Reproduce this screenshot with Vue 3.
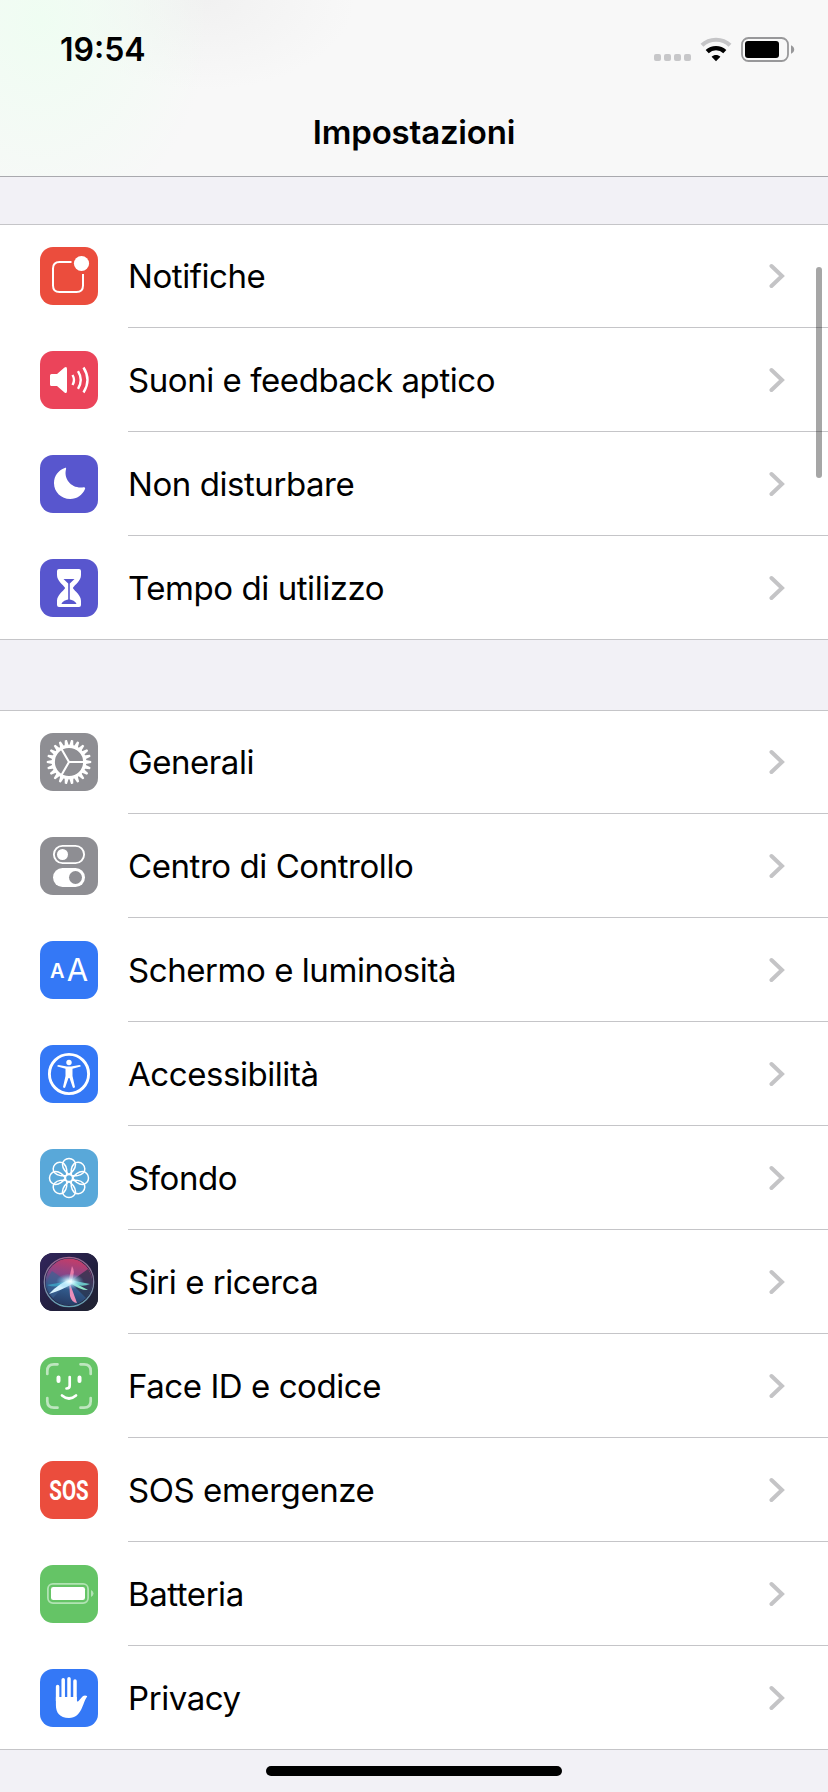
<template>
  <div class="screen">
    <header class="nav-header">
      <div class="status-bar">
        <span class="clock">19:54</span>
        <div class="status-icons">
          <svg class="signal" viewBox="0 0 37 7">
            <rect v-for="n in 4" :key="n" :x="(n - 1) * 10" y="0" width="7" height="7" rx="2" fill="#c7c7c9" />
          </svg>
          <svg class="wifi" viewBox="0 0 32 25" fill="none">
            <path d="M2 8.2C9.5 .9 22.5 .9 30 8.2" stroke="#c5c5c7" stroke-width="4.2" />
            <path d="M7.200 14.6C12 9.9 20 9.9 24.8 14.6" stroke="#000" stroke-width="4.4" />
            <path d="M16 24.3L11.6 19.8C14 17.5 18 17.5 20.4 19.8Z" fill="#000" />
          </svg>
          <svg class="battery" viewBox="0 0 54 25">
            <rect x="1" y="1" width="46" height="23" rx="6.5" fill="none" stroke="#98989a" stroke-width="1.8" />
            <rect x="4" y="4" width="34" height="17" rx="3" fill="#000" />
            <path d="M50 8.2C52 9 53.2 10.5 53.2 12.5S52 16 50 16.8Z" fill="#98989a" />
          </svg>
        </div>
      </div>
      <h1 class="title">Impostazioni</h1>
    </header>

    <main class="settings">
      <ul v-for="(group, index) in groups" :key="index" class="group">
        <li v-for="item in group" :key="item.icon" class="row">
          <span class="icon" :class="item.icon">
            <svg v-if="item.icon === 'notifications'" viewBox="0 0 58 58" fill="none">
              <path d="M31.5 15H19.5Q13 15 13 21.5V38.5Q13 45 19.5 45H36.5Q43 45 43 38.5V27" stroke="#fff" stroke-width="2" />
              <circle cx="41.500" cy="16.500" r="7.600" fill="#fff" />
            </svg>

            <svg v-else-if="item.icon === 'sounds'" viewBox="0 0 58 58" fill="none">
              <path d="M11.5 23H17L24.5 16.5Q27 15 27 18V40Q27 43 24.5 41.5L17 35H11.5Q10 35 10 33.5V24.5Q10 23 11.5 23Z" fill="#fff" />
              <path d="M32.5 24Q35.5 29 32.5 34M38 20.2Q43.5 29 38 37.8M43.5 16.5Q51.5 29 43.5 41.5" stroke="#fff" stroke-width="2.4" />
            </svg>

            <svg v-else-if="item.icon === 'dnd'" viewBox="0 0 58 58">
              <path d="M24.8 13C25.8 12.6 26.4 13.2 26 14.2C23.5 24 31.5 34 43.6 32.3C44.8 32 45.5 32.8 45 34C42.5 40 37 44 30.2 44C21.3 44 14 37 14 28.2C14 21 18.3 15.4 24.8 13Z" fill="#fff" />
            </svg>

            <svg v-else-if="item.icon === 'screentime'" viewBox="0 0 58 58">
              <path d="M19 10H39Q41 10 41 12V16C41 22 35 25.5 32.8 29C35 32.5 41 36 41 42V46Q41 48 39 48H19Q17 48 17 46V42C17 36 23 32.5 25.2 29C23 25.5 17 22 17 16V12Q17 10 19 10Z" fill="#fff" />
              <path d="M23.5 20H34.5L29.8 24.5V40.5C33 41 36 43 36.5 45H21.5C22 43 25 41 28.2 40.5V24.5Z" fill="#5856ce" />
            </svg>

            <svg v-else-if="item.icon === 'general'" viewBox="0 0 58 58" fill="none">
              <circle cx="29" cy="29" r="15.7" stroke="#fff" stroke-width="3.2" />
              <path
                v-for="angle in gearTeeth"
                :key="angle"
                d="M26.8 13.5L27.9 7Q29 6.4 30.1 7L31.2 13.5Z"
                fill="#fff"
                :transform="`rotate(${angle} 29 29)`"
              />
              <path d="M29 29H44M29 29L21.2 15.5M29 29L21.2 42.5" stroke="#fff" stroke-width="2.1" />
            </svg>

            <svg v-else-if="item.icon === 'control'" viewBox="0 0 58 58" fill="none">
              <rect x="13.9" y="8.9" width="30.2" height="17.2" rx="8.6" stroke="#fff" stroke-width="1.9" />
              <circle cx="22.5" cy="17.5" r="5.5" fill="#fff" />
              <rect x="13" y="31" width="32" height="19" rx="9.5" fill="#fff" />
              <circle cx="35.5" cy="40.5" r="6.5" fill="#8e8e93" />
            </svg>

            <svg v-else-if="item.icon === 'display'" viewBox="0 0 58 58" fill="#fff">
              <text x="17.2" y="37" class="small-a" text-anchor="middle">A</text>
              <text x="37.5" y="40" class="big-a" text-anchor="middle">A</text>
            </svg>

            <svg v-else-if="item.icon === 'accessibility'" viewBox="0 0 58 58" fill="none">
              <circle cx="29" cy="29" r="19.6" stroke="#fff" stroke-width="2.9" />
              <circle cx="29" cy="17.5" r="2.7" fill="#fff" />
              <path d="M18.5 20L27 21.4H31L39.5 20Q41.3 20.1 40.6 21.6L32.5 23.8V31L35 42Q34 43.7 32.8 42.5L29.5 33H28.5L25.2 42.5Q24 43.7 23 42L25.5 31V23.8L17.4 21.6Q16.8 20.1 18.5 20Z" fill="#fff" />
            </svg>

            <svg v-else-if="item.icon === 'wallpaper'" viewBox="0 0 58 58" fill="none" stroke="#fff" stroke-width="1.5">
              <circle cx="29" cy="29" r="3.6" />
              <path
                v-for="n in 8"
                :key="n"
                d="M29 25.4C26 23.6 22.5 19.5 22.5 15.5A6.5 6 0 0 1 35.5 15.5C35.5 19.5 32 23.6 29 25.4Z"
                :transform="`rotate(${n * 45} 29 29)`"
              />
            </svg>

            <svg v-else-if="item.icon === 'siri'" viewBox="0 0 58 58" fill="none">
              <defs>
                <linearGradient id="siri-bg" x1="0" y1="0" x2="1" y2="1">
                  <stop offset="0" stop-color="#32255c" />
                  <stop offset=".6" stop-color="#211f3d" />
                  <stop offset="1" stop-color="#202431" />
                </linearGradient>
                <linearGradient id="siri-orb" x1=".6" y1="0" x2=".4" y2="1">
                  <stop offset="0" stop-color="#c63c68" />
                  <stop offset=".35" stop-color="#8c4587" />
                  <stop offset=".65" stop-color="#315b8d" />
                  <stop offset="1" stop-color="#263961" />
                </linearGradient>
                <radialGradient id="siri-glow">
                  <stop offset="0" stop-color="#fff" />
                  <stop offset=".3" stop-color="#cdf4ff" stop-opacity=".85" />
                  <stop offset="1" stop-color="#54b9e8" stop-opacity="0" />
                </radialGradient>
                <linearGradient id="siri-ring" x1="0" y1="0" x2="0" y2="1">
                  <stop offset="0" stop-color="#9d668f" />
                  <stop offset="1" stop-color="#65a2b4" />
                </linearGradient>
              </defs>
              <rect width="58" height="58" fill="url(#siri-bg)" />
              <circle cx="29" cy="29" r="23.5" fill="url(#siri-orb)" />
              <path d="M30 29L48 16C54 25 54 36 46 45Z" fill="#293149" opacity=".75" />
              <path d="M28 29L12 18C6 26 6 37 13 45Z" fill="#3a6294" opacity=".65" />
              <path d="M29 28L7 32Q17 36 29 30Z" fill="#3eaccb" opacity=".75" />
              <path d="M30 27L50 31Q42 35 30 30Z" fill="#6fd3cc" opacity=".9" />
              <path d="M31 28L48 37Q42 38 30 30Z" fill="#8fe6c8" />
              <path d="M28 30L32 13Q36 19 31 30Z" fill="#e87ba9" />
              <path d="M29 28L37 50Q32 50 30 43Z" fill="#ea8fba" />
              <path d="M32 26Q20 29 9 41Q22 37 32 31Z" fill="#d6f3ff" />
              <ellipse cx="30" cy="28.5" rx="14" ry="8" fill="url(#siri-glow)" />
              <circle cx="29" cy="29" r="24.7" stroke="url(#siri-ring)" stroke-width="1.3" />
            </svg>

            <svg v-else-if="item.icon === 'faceid'" viewBox="0 0 58 58" fill="none" stroke="#fff" stroke-linecap="round">
              <path d="M7.3 17V14Q7.3 7.3 14 7.3H17.5M40.5 7.3H44Q50.7 7.3 50.7 14V17M50.7 41V44Q50.7 50.7 44 50.7H40.5M17.5 50.7H14Q7.3 50.7 7.3 44V41" stroke-width="2.7" opacity=".58" />
              <path d="M18.5 20.5V24M39.5 20.5V24" stroke-width="4" />
              <path d="M29.7 20V28.5Q29.7 31.5 26.5 31.5M22 38.5Q29 44.5 36 38.5" stroke-width="2.7" />
            </svg>

            <svg v-else-if="item.icon === 'sos'" viewBox="0 0 58 58" fill="#fff">
              <text class="sos-text" text-anchor="middle" transform="translate(29 38.7) scale(.76 1)">SOS</text>
            </svg>

            <svg v-else-if="item.icon === 'power'" viewBox="0 0 58 58" fill="none">
              <rect x="7.9" y="18.9" width="40.2" height="19.2" rx="5" stroke="#b2e3b4" stroke-width="1.8" />
              <rect x="11" y="22" width="34" height="13" rx="2.3" fill="#fff" />
              <path d="M51 25Q53.5 26.3 53.5 28.5T51 32Z" fill="#b2e3b4" />
            </svg>

            <svg v-else viewBox="0 0 58 58" fill="none">
              <path d="M17.6 17.5V32M23.2 10.7V32M29 9.8V32M35 11.9V32" stroke="#fff" stroke-width="3.5" stroke-linecap="round" />
              <path d="M15.9 28H36.8V31C37 33 38 33 39 31.5L42.5 27.5Q44.5 26 47 27Q47.5 27.5 46.5 28.5C42.5 34 42 48.8 29 49C19.5 49 15.9 43.5 15.9 36Z" fill="#fff" />
            </svg>
          </span>

          <div class="row-content">
            <span class="label">{{ item.label }}</span>
            <svg class="chevron" viewBox="0 0 16 26" fill="none">
              <path d="M2.5 3L13 13L2.5 23" stroke="#c4c4c6" stroke-width="4" stroke-linecap="round" />
            </svg>
          </div>
        </li>
      </ul>
    </main>

    <div class="scrollbar"></div>
    <div class="home-indicator"></div>
  </div>
</template>

<script setup>
const groups = [
  [
    { icon: 'notifications', label: 'Notifiche' },
    { icon: 'sounds', label: 'Suoni e feedback aptico' },
    { icon: 'dnd', label: 'Non disturbare' },
    { icon: 'screentime', label: 'Tempo di utilizzo' }
  ],
  [
    { icon: 'general', label: 'Generali' },
    { icon: 'control', label: 'Centro di Controllo' },
    { icon: 'display', label: 'Schermo e luminosità' },
    { icon: 'accessibility', label: 'Accessibilità' },
    { icon: 'wallpaper', label: 'Sfondo' },
    { icon: 'siri', label: 'Siri e ricerca' },
    { icon: 'faceid', label: 'Face ID e codice' },
    { icon: 'sos', label: 'SOS emergenze' },
    { icon: 'power', label: 'Batteria' },
    { icon: 'privacy', label: 'Privacy' }
  ]
]

// 22 teeth, with a gap centred at the top
const gearTeeth = Array.from({ length: 22 }, (_, i) => ((i + 0.5) * 360) / 22)
</script>

<style>
body {
  margin: 0;
  background: #f2f1f6;
}
</style>

<style scoped>
.screen {
  position: relative;
  width: 828px;
  height: 1792px;
  overflow: hidden;
  background: #f2f1f6;
  color: #000;
  font-family: Inter, "Liberation Sans", sans-serif;
}

.nav-header {
  box-sizing: border-box;
  height: 177px;
  border-bottom: 1px solid #a9a9ae;
  background:
    radial-gradient(ellipse 170px 210px at 40px 20px, #effdf2 0%, rgba(243, 252, 245, 0) 100%),
    radial-gradient(ellipse 150px 90px at 205px 0, #f1f1f1 0%, rgba(247, 247, 247, 0) 100%),
    #f8f8f8;
}

.status-bar {
  display: flex;
  justify-content: space-between;
  height: 88px;
  padding: 0 33px 0 60px;
}

.clock {
  padding-top: 30px;
  font-size: 32px;
  font-weight: 600;
  line-height: 40px;
}

.status-icons {
  display: flex;
  align-items: flex-end;
  height: 62px;
}

.status-icons svg {
  display: block;
}

.signal {
  width: 37px;
  height: 7px;
  margin: 0 9px 1px 0;
}

.wifi {
  width: 32px;
  height: 25px;
  margin-right: 9px;
}

.battery {
  width: 54px;
  height: 25px;
}

.title {
  margin: 0;
  padding-top: 24px;
  font-size: 33px;
  font-weight: 600;
  line-height: 40px;
  letter-spacing: -0.2px;
  text-align: center;
}

.settings {
  display: flex;
  flex-direction: column;
  gap: 70px;
  padding-top: 47px;
}

.group {
  margin: 0;
  padding: 0;
  list-style: none;
  background: #fff;
  box-shadow: inset 0 1px #c5c5c8, inset 0 -1px #c5c5c8;
}

.row {
  display: flex;
  align-items: center;
  gap: 30px;
  height: 104px;
  padding-left: 40px;
}

.icon {
  flex: none;
  width: 58px;
  height: 58px;
  border-radius: 13px;
  overflow: hidden;
}

.icon svg {
  display: block;
  width: 58px;
  height: 58px;
}

.notifications,
.sos {
  background: #eb4d3d;
}

.sounds {
  background: #eb445a;
}

.dnd,
.screentime {
  background: #5856ce;
}

.general,
.control {
  background: #8e8e93;
}

.display,
.accessibility,
.privacy {
  background: #3478f6;
}

.wallpaper {
  background: #59a8d9;
}

.siri {
  background: #211f3d;
}

.faceid,
.power {
  background: #65c466;
}

.small-a {
  font-size: 20px;
  font-weight: 600;
}

.big-a {
  font-size: 31px;
  font-weight: 400;
}

.sos-text {
  font-family: Roboto, "Liberation Sans", sans-serif;
  font-size: 27px;
  font-weight: 700;
}

.row-content {
  display: flex;
  flex: 1;
  align-items: center;
  justify-content: space-between;
  box-sizing: border-box;
  height: 104px;
  padding: 1px 43px 0 0;
  border-bottom: 1px solid #c5c5c8;
}

.label {
  font-size: 33px;
  line-height: 42px;
  letter-spacing: -0.44px;
  white-space: nowrap;
}

.chevron {
  width: 16px;
  height: 26px;
}

.scrollbar {
  position: absolute;
  top: 267px;
  right: 6px;
  width: 6px;
  height: 211px;
  border-radius: 3px;
  background: rgba(0, 0, 0, 0.35);
}

.home-indicator {
  position: absolute;
  bottom: 16px;
  left: 266px;
  width: 296px;
  height: 10px;
  border-radius: 5px;
  background: #000;
}
</style>
